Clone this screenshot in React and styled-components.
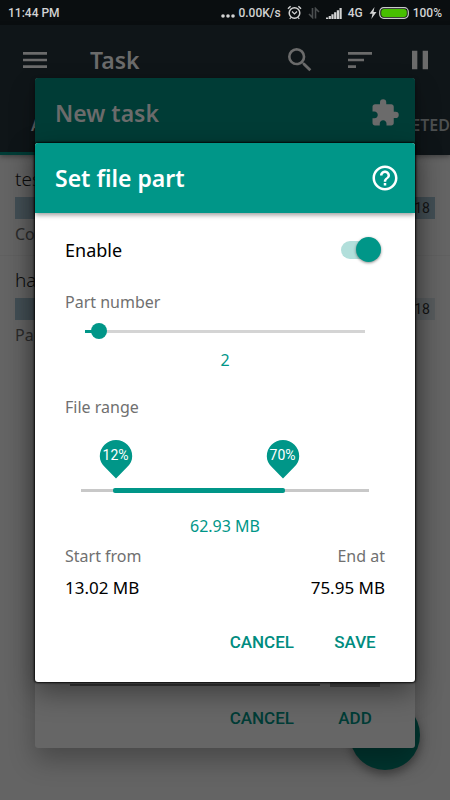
import React, { useState } from "react";
import styled, { createGlobalStyle } from "styled-components";
import {
  MdMenu,
  MdSearch,
  MdSort,
  MdPause,
  MdExtension,
  MdHelpOutline,
} from "react-icons/md";

const TEAL = "#009688";
const TEXT_TEAL = "#008c7f";
const DIM_TEAL = "#003c36";
const DIM_ICON = "#6b6b6b";

const GlobalStyle = createGlobalStyle`
  *, *::before, *::after { box-sizing: border-box; }
  body { margin: 0; background: #646464; font-family: "Noto Sans", "Open Sans", sans-serif; overflow: hidden; }
  button, input { font: inherit; margin: 0; }
  h1, h2, p { margin: 0; }
`;

const Screen = styled.div`
  position: relative;
  display: flex;
  flex-direction: column;
  min-height: 100vh;
  background: #646464;
`;

const StatusBar = styled.header`
  display: flex;
  align-items: center;
  height: 25px;
  padding: 0 8px;
  background: #0a0e10;
  color: #d2d3d3;
  font: 500 12px/24px Roboto, sans-serif;
`;

const StatusGroup = styled.div`
  display: flex;
  align-items: center;
  margin-left: auto;
  gap: ${(p) => p.$gap}px;
`;

const AppBar = styled.div`
  background: #0f1518;
  box-shadow: 0 2px 5px rgba(0, 0, 0, 0.35);
`;

const Toolbar = styled.div`
  display: flex;
  align-items: center;
  height: 70px;
  padding-left: 5px;
`;

const ToolButton = styled.button`
  display: grid;
  place-items: center;
  width: 60px;
  height: 60px;
  padding: 0;
  border: 0;
  background: none;
  color: ${DIM_ICON};
  font-size: 32px;
`;

const ToolTitle = styled.h1`
  flex: 1;
  padding-left: 25px;
  color: ${DIM_ICON};
  font-size: 23px;
  font-weight: 600;
  line-height: 32px;
`;

const Tabs = styled.nav`
  display: flex;
  justify-content: space-between;
  height: 60px;
`;

const Tab = styled.button`
  padding: 2px ${(p) => (p.$active ? 31 : 0)}px 0;
  border: 0;
  border-bottom: 3px solid ${(p) => (p.$active ? DIM_TEAL : "transparent")};
  background: none;
  color: ${(p) => (p.$active ? "#6b6b6b" : "#4d5051")};
  font-size: 16px;
  font-weight: 600;
`;

const TaskList = styled.ul`
  margin: 0;
  padding: 0;
  list-style: none;
`;

const TaskItem = styled.li`
  height: 101px;
  padding: 9px 15px 0;

  & + & {
    box-shadow: 0 -1px #606060;
  }
`;

const TaskName = styled.p`
  height: 33px;
  color: #0b0b0b;
  font-size: 19px;
  font-weight: 300;
  line-height: 31px;
`;

const TaskBar = styled.div`
  height: 22px;
  padding-right: 5px;
  background: linear-gradient(to right, #434f55 ${(p) => p.$done}%, #585c5e 0);
  color: #141414;
  font: 14px/22px Roboto, sans-serif;
  text-align: right;
`;

const TaskState = styled.p`
  color: #2b2b2b;
  font-size: 16px;
  line-height: 30px;
`;

const Fab = styled.button`
  position: absolute;
  right: 30px;
  bottom: 30px;
  width: 70px;
  height: 70px;
  border: 0;
  border-radius: 50%;
  background: #00352f;
  box-shadow: 0 5px 10px rgba(0, 0, 0, 0.35);
`;

const Overlay = styled.div`
  position: absolute;
  inset: 25px 0 0;
  display: grid;
  align-items: center;
  padding: 0 35px;
`;

const Dialog = styled.section`
  display: flex;
  flex-direction: column;
  border-radius: 3px;
  background: ${(p) => (p.$dim ? "#666" : "#fff")};
  box-shadow: ${(p) =>
    p.$dim
      ? "0 12px 26px rgba(0, 0, 0, 0.28)"
      : "0 0 2px 1px rgba(0, 0, 0, 0.85), 0 10px 28px rgba(0, 0, 0, 0.42)"};
  height: ${(p) => (p.$dim ? "calc(100vh - 130px)" : "auto")};
`;

const DialogHeader = styled.header`
  display: flex;
  align-items: center;
  justify-content: space-between;
  height: 70px;
  padding: 0 15px 0 20px;
  border-radius: 3px 3px 0 0;
  background: ${(p) => (p.$dim ? DIM_TEAL : TEAL)};
  color: ${(p) => (p.$dim ? DIM_ICON : "#fff")};
  box-shadow: 0 2px 5px rgba(0, 0, 0, 0.4);
`;

const DialogTitle = styled.h2`
  font-size: 23px;
  font-weight: 600;
  line-height: 30px;
`;

const HeaderButton = styled.button`
  display: grid;
  padding: 0;
  border: 0;
  background: none;
  color: inherit;
  font-size: 30px;
`;

const FieldStrip = styled.div`
  display: flex;
  align-items: flex-end;
  flex: 1;
  gap: 10px;
  padding: 0 35px;
`;

const LineInput = styled.input`
  flex: 1;
  min-width: 0;
  height: 40px;
  margin-bottom: 1px;
  border: 0;
  border-bottom: 2px solid #373737;
  background: none;
`;

const UnitButton = styled.button`
  width: 50px;
  height: 40px;
  border: 0;
  background: #454545;
`;

const Actions = styled.footer`
  display: flex;
  justify-content: flex-end;
  gap: 20px;
  padding: ${(p) => (p.$dim ? "13px 29px 12px" : "19px 29px 22px")};
`;

const ActionButton = styled.button`
  min-width: 62px;
  height: 36px;
  padding: 0 10px;
  border: 0;
  background: none;
  color: ${(p) => (p.$dim ? DIM_TEAL : TEXT_TEAL)};
  font: 500 17px/36px Roboto, sans-serif;
`;

const Form = styled.div`
  display: flex;
  flex-direction: column;
  padding: 0 30px;
`;

const EnableRow = styled.label`
  display: flex;
  align-items: center;
  justify-content: space-between;
  height: 74px;
  padding-right: 4px;
  font-size: 18px;
`;

const Switch = styled.input`
  appearance: none;
  position: relative;
  width: 40px;
  height: 18px;
  border-radius: 9px;
  background: ${(p) => (p.checked ? "#b2dfdb" : "#bdbdbd")};

  &::after {
    content: "";
    position: absolute;
    top: -4px;
    ${(p) => (p.checked ? "right" : "left")}: 0;
    width: 25px;
    height: 25px;
    border-radius: 50%;
    background: ${(p) => (p.checked ? TEAL : "#fafafa")};
    box-shadow: 0 1px 3px rgba(0, 0, 0, 0.45);
  }
`;

const FieldLabel = styled.label`
  color: #707070;
  font-size: 16px;
  line-height: 30px;
`;

const Readout = styled.output`
  display: block;
  color: ${TEAL};
  font-size: 16px;
  line-height: 30px;
  text-align: center;
`;

const PartSlider = styled.input`
  appearance: none;
  display: block;
  height: 28px;
  margin: 0 12px;
  background:
    linear-gradient(${TEAL}, ${TEAL}) 8px center / var(--filled) 3px no-repeat,
    linear-gradient(#d4d4d4, #d4d4d4) center / calc(100% - 16px) 3px no-repeat;

  &::-webkit-slider-thumb {
    appearance: none;
    width: 16px;
    height: 16px;
    border-radius: 50%;
    background: ${TEAL};
  }
`;

const RangeGroup = styled.div`
  margin-top: 17px;
`;

const RangeArea = styled.div`
  position: relative;
  height: 89px;
  margin: 0 16px;
  padding-top: 66px;
`;

const RangeTrack = styled.div`
  height: 5px;
  background: linear-gradient(#c8c8c8, #c8c8c8) center / 100% 3px no-repeat;
`;

const RangeFill = styled.div`
  height: 5px;
  border-radius: 2px;
  background: ${TEAL};
`;

const Pin = styled.output`
  position: absolute;
  top: 17px;
  width: 34px;
  height: 40px;
  margin-left: -17px;
  color: #fff;
  font: 14px/33px Roboto, sans-serif;
  text-align: center;

  svg {
    position: absolute;
    inset: 0;
    z-index: -1;
  }
`;

const PinLayer = styled.div`
  position: absolute;
  inset: 0;
  z-index: 0;
`;

const RangeInput = styled.input`
  appearance: none;
  position: absolute;
  left: -8px;
  top: 60px;
  width: calc(100% + 16px);
  height: 20px;
  background: none;
  pointer-events: none;

  &::-webkit-slider-thumb {
    appearance: none;
    width: 16px;
    height: 20px;
    background: transparent;
    pointer-events: auto;
  }
`;

const Bounds = styled.dl`
  display: flex;
  justify-content: space-between;
  margin: 0;
`;

const Bound = styled.div`
  text-align: ${(p) => p.$align};
`;

const BoundName = styled.dt`
  color: #707070;
  font-size: 16px;
  line-height: 30px;
`;

const BoundValue = styled.dd`
  margin: 0;
  color: #000;
  font-size: 17px;
  line-height: 34px;
`;

function PinMark({ value }) {
  return (
    <Pin style={{ left: `${value}%` }}>
      <svg width="34" height="40" viewBox="0 0 34 40" aria-hidden="true">
        <path
          d="M17 1a16.2 16.2 0 0 1 16.2 16.2c0 4.600-2 7.800-5 10.800L17 39.500 5.800 28c-3-3-5-6.200-5-10.800A16.200 16.200 0 0 1 17 1z"
          fill={TEAL}
        />
      </svg>
      {value}%
    </Pin>
  );
}

function AlarmIcon() {
  return (
    <svg width="15" height="15" viewBox="0 0 15 15" fill="none" stroke="currentColor" aria-hidden="true">
      <circle cx="7.500" cy="8" r="5.300" strokeWidth="1.500" />
      <path d="M1 3.800 3.600 1.300M14 3.800 11.400 1.300" strokeWidth="1.500" />
      <path d="M5 6.500 7.500 9 10 6.500M3.800 12.500 2.800 14M11.200 12.500l1 1.500" strokeWidth="1.200" />
    </svg>
  );
}

function DataIcon() {
  return (
    <svg width="12" height="12" viewBox="0 0 12 12" fill="none" stroke="#4b4f50" strokeWidth="1.600" aria-hidden="true">
      <path d="M4.500 1v9.500L1 7M7.500 11.500V1.500L11 5" />
    </svg>
  );
}

function SignalIcon() {
  return (
    <svg width="16" height="12" viewBox="0 0 16 12" fill="currentColor" aria-hidden="true">
      <path d="M0 10.500h2.200V12H0zM2.700 9h2.200v3H2.700zM5.400 7.200h2.200V12H5.400zM8.100 5.200h2.200V12H8.100zM10.800 3.200H13V12h-2.200zM13.500 1h2.200v11h-2.200z" />
    </svg>
  );
}

function BatteryIcon() {
  return (
    <svg width="41" height="14" viewBox="0 0 41 14" aria-hidden="true">
      <path d="M5.500 1 .5 7.800h3L2.300 13l5.200-7h-3z" fill="#d2d3d3" />
      <rect x="10.700" y="1.700" width="28.600" height="10.600" rx="4" fill="#111" stroke="#c9cbc9" strokeWidth="1.200" />
      <rect x="12.200" y="3" width="25.600" height="8" rx="3" fill="#47bf00" />
    </svg>
  );
}

function DotsIcon() {
  return (
    <svg width="14" height="12" viewBox="0 0 14 12" fill="currentColor" aria-hidden="true">
      <circle cx="2" cy="9" r="1.800" />
      <circle cx="7" cy="9" r="1.800" />
      <circle cx="12" cy="9" r="1.800" />
    </svg>
  );
}

const tasks = [
  { name: "test", state: "Completed", date: "2018", done: 100 },
  { name: "ha", state: "Paused", date: "2018", done: 60 },
];

export default function App() {
  const [enabled, setEnabled] = useState(true);
  const [parts, setParts] = useState(2);
  const [from, setFrom] = useState(12);
  const [to, setTo] = useState(70);
  const filled = (parts - 1) / 20;

  return (
    <Screen>
      <GlobalStyle />
      <StatusBar>
        <time>11:44 PM</time>
        <StatusGroup $gap={6}>
          <StatusGroup $gap={3}>
            <DotsIcon />
            <span>0.00K/s</span>
          </StatusGroup>
          <AlarmIcon />
          <DataIcon />
          <SignalIcon />
          <span>4G</span>
          <StatusGroup $gap={3}>
            <BatteryIcon />
            <span>100%</span>
          </StatusGroup>
        </StatusGroup>
      </StatusBar>

      <AppBar>
        <Toolbar>
          <ToolButton aria-label="Menu"><MdMenu /></ToolButton>
          <ToolTitle>Task</ToolTitle>
          <ToolButton aria-label="Search"><MdSearch /></ToolButton>
          <ToolButton aria-label="Sort"><MdSort /></ToolButton>
          <ToolButton aria-label="Pause"><MdPause /></ToolButton>
        </Toolbar>
        <Tabs>
          <Tab $active>ALL</Tab>
          <Tab>COMPLETED</Tab>
        </Tabs>
      </AppBar>

      <TaskList>
        {tasks.map((task) => (
          <TaskItem key={task.name}>
            <TaskName>{task.name}</TaskName>
            <TaskBar $done={task.done}>{task.date}</TaskBar>
            <TaskState>{task.state}</TaskState>
          </TaskItem>
        ))}
      </TaskList>
      <Fab aria-label="Add task" />

      <Overlay>
        <Dialog $dim aria-label="New task">
          <DialogHeader $dim>
            <DialogTitle>New task</DialogTitle>
            <HeaderButton aria-label="Extensions"><MdExtension /></HeaderButton>
          </DialogHeader>
          <FieldStrip>
            <LineInput aria-label="Size" />
            <UnitButton aria-label="Unit" />
          </FieldStrip>
          <Actions $dim>
            <ActionButton $dim>CANCEL</ActionButton>
            <ActionButton $dim>ADD</ActionButton>
          </Actions>
        </Dialog>
      </Overlay>

      <Overlay>
        <Dialog role="dialog" aria-label="Set file part">
          <DialogHeader>
            <DialogTitle>Set file part</DialogTitle>
            <HeaderButton aria-label="Help"><MdHelpOutline /></HeaderButton>
          </DialogHeader>
          <Form>
            <EnableRow>
              Enable
              <Switch
                type="checkbox"
                role="switch"
                checked={enabled}
                onChange={(e) => setEnabled(e.target.checked)}
              />
            </EnableRow>
            <FieldLabel htmlFor="parts">Part number</FieldLabel>
            <PartSlider
              id="parts"
              type="range"
              min="1"
              max="21"
              value={parts}
              onChange={(e) => setParts(Number(e.target.value))}
              style={{ "--filled": `calc((100% - 16px) * ${filled})` }}
            />
            <Readout htmlFor="parts">{parts}</Readout>

            <RangeGroup>
              <FieldLabel htmlFor="from">File range</FieldLabel>
              <RangeArea>
                <RangeTrack>
                  <RangeFill style={{ marginLeft: `${from - 1}%`, width: `${to - from + 2}%` }} />
                </RangeTrack>
                <PinLayer>
                  <PinMark value={from} />
                  <PinMark value={to} />
                </PinLayer>
                <RangeInput
                  id="from"
                  type="range"
                  value={from}
                  onChange={(e) => setFrom(Math.min(Number(e.target.value), to))}
                />
                <RangeInput
                  aria-label="File range end"
                  type="range"
                  value={to}
                  onChange={(e) => setTo(Math.max(Number(e.target.value), from))}
                />
              </RangeArea>
              <Readout>62.93 MB</Readout>
            </RangeGroup>

            <Bounds>
              <Bound $align="left">
                <BoundName>Start from</BoundName>
                <BoundValue>13.02 MB</BoundValue>
              </Bound>
              <Bound $align="right">
                <BoundName>End at</BoundName>
                <BoundValue>75.95 MB</BoundValue>
              </Bound>
            </Bounds>
          </Form>
          <Actions>
            <ActionButton>CANCEL</ActionButton>
            <ActionButton>SAVE</ActionButton>
          </Actions>
        </Dialog>
      </Overlay>
    </Screen>
  );
}
